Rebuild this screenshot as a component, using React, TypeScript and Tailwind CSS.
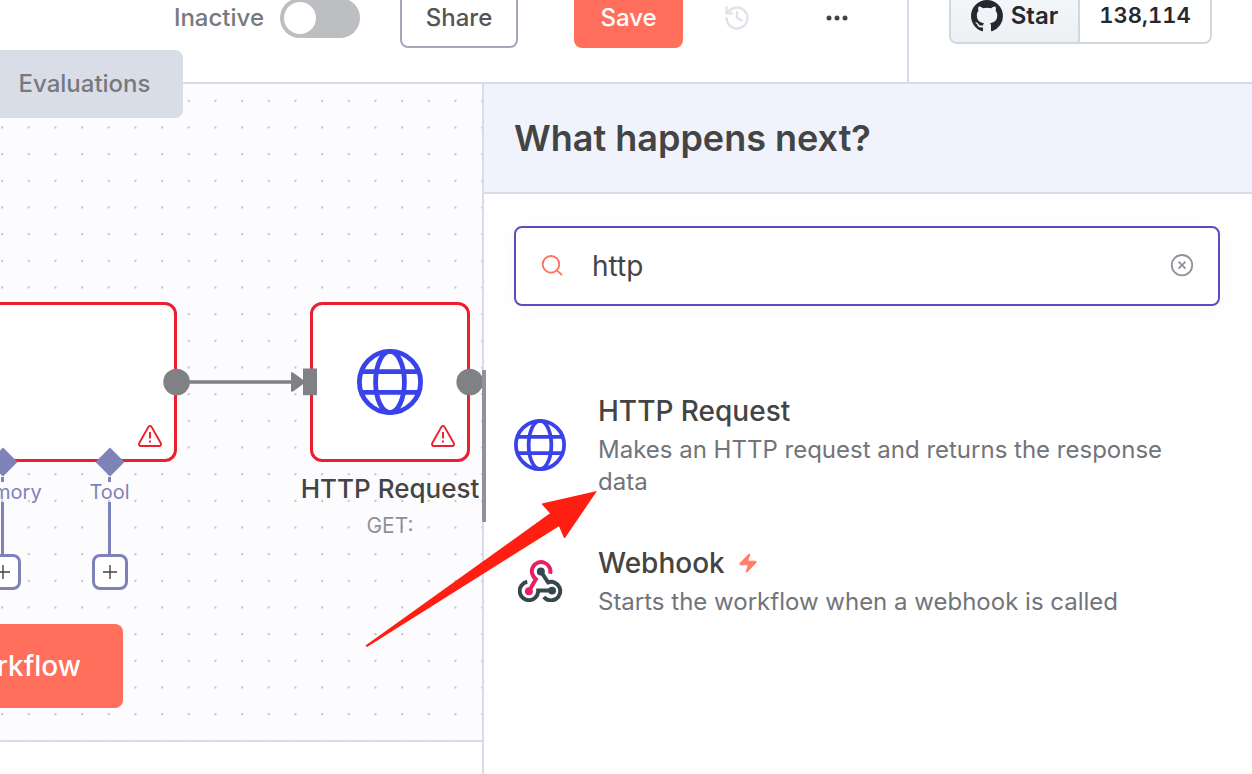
import React, { useState } from "react";
import { History, Zap } from "lucide-react";

interface IconProps {
  className?: string;
}

const GlobeIcon = ({ className }: IconProps) => (
  <svg className={className} viewBox="0 0 66 66" fill="none" stroke="#3a42e9" strokeWidth="4.8">
    <circle cx="33" cy="33" r="30.6" />
    <ellipse cx="33" cy="33" rx="14.4" ry="30.6" />
    <path d="M4 22.6h58M4 43.4h58" />
  </svg>
);

const WebhookIcon = ({ className }: IconProps) => (
  <svg className={className} viewBox="84 62 136 126" fill="none" strokeWidth="12">
    <path stroke="#37474f" d="M112 127.500A28 28 0 1 0 145 157V154H187" />
    <path stroke="#37474f" d="M162 173.500A28 28 0 1 0 175 129L153 96" />
    <path stroke="#e91e63" d="M181 103A28 28 0 1 0 138 119L117 156" />
    <circle cx="153" cy="96" r="12" fill="#37474f" />
    <circle cx="187" cy="154" r="12" fill="#37474f" />
    <circle cx="117" cy="156" r="12" fill="#e91e63" />
  </svg>
);

const WarningIcon = ({ className }: IconProps) => (
  <svg className={className} viewBox="0 0 24 22" fill="none" stroke="#ea1f30" strokeWidth="1.9">
    <path strokeLinejoin="round" d="M10.300 2.100Q12 -.3 13.700 2.100L22.700 18Q23.700 20.900 21 21H3Q.3 20.900 1.300 18Z" />
    <path d="M12 7v6.500M12 15.600v1.900" />
  </svg>
);

const GithubIcon = ({ className }: IconProps) => (
  <svg className={className} viewBox="0 0 16 16" fill="currentColor">
    <path d="M8 0C3.58 0 0 3.58 0 8c0 3.54 2.29 6.53 5.47 7.59.4.07.55-.17.55-.38 0-.19-.01-.82-.01-1.49-2.01.37-2.53-.49-2.69-.94-.09-.23-.48-.94-.82-1.13-.28-.15-.68-.52-.01-.53.63-.01 1.08.58 1.23.82.72 1.21 1.87.87 2.33.66.07-.52.28-.87.51-1.07-1.78-.2-3.64-.89-3.64-3.95 0-.87.31-1.59.82-2.15-.08-.2-.36-1.02.08-2.12 0 0 .67-.21 2.2.82.64-.18 1.32-.27 2-.27s1.36.09 2 .27c1.53-1.04 2.2-.82 2.2-.82.44 1.1.16 1.92.08 2.12.51.56.82 1.27.82 2.15 0 3.07-1.87 3.75-3.65 3.95.29.25.54.73.54 1.48 0 1.07-.01 1.93-.01 2.2 0 .21.15.46.55.38A8.013 8.013 0 0016 8c0-4.42-3.58-8-8-8z" />
  </svg>
);

const TopBar = () => {
  const [active, setActive] = useState(false);

  return (
    <header className="flex h-[84px] shrink-0 border-b-2 border-[#d9dce8] bg-white">
      <div className="flex min-w-0 flex-1 flex-col justify-end overflow-hidden">
        <div className="flex h-32 shrink-0 items-center justify-end pr-[58px]">
          <label htmlFor="active" className="text-2xl font-medium text-[#77797e]">
            {active ? "Active" : "Inactive"}
          </label>
          <input
            id="active"
            type="checkbox"
            checked={active}
            onChange={() => setActive(!active)}
            className="ml-4 mr-10 h-10 w-20 appearance-none rounded-full bg-[#bdbec2] p-1 before:block before:h-8 before:w-8 before:rounded-full before:bg-white"
          />
          <button className="mr-14 h-[60px] w-[118px] rounded-lg border-2 border-[#a3a8b8] text-2xl font-medium text-[#555555]">
            Share
          </button>
          <button className="mr-10 h-[60px] w-[109px] rounded-lg bg-[#ff6f5c] text-2xl font-medium text-white">
            Save
          </button>
          <button aria-label="Workflow history" className="mr-[74px] text-[#e0e3ea]">
            <History size={28} />
          </button>
          <button aria-label="More options">
            <svg className="h-6 w-6" viewBox="0 0 24 24" fill="#444444">
              <circle cx="4" cy="12" r="2.500" />
              <circle cx="12" cy="12" r="2.500" />
              <circle cx="20" cy="12" r="2.500" />
            </svg>
          </button>
        </div>
      </div>
      <div className="flex flex-col justify-end overflow-hidden border-l-2 border-[#d9dce8] px-10 pb-[38px]">
        <div className="flex h-14 shrink-0 rounded-lg border-2 border-[#d1d7df] text-2xl font-semibold text-[#25292f]">
          <a href="#star" className="flex w-[129px] items-center justify-center gap-2 rounded-l-md border-r-2 border-[#d1d7df] bg-linear-to-b from-[#f6f8fa] to-[#ebf0f4]">
            <GithubIcon className="h-8 w-8" />
            Star
          </a>
          <a href="#stargazers" className="flex w-[130px] items-center justify-center text-[22px] tabular-nums">
            138,114
          </a>
        </div>
      </div>
    </header>
  );
};

const AddTool = ({ name }: { name: string }) => (
  <div className="flex w-[107px] flex-col items-center">
    <svg className="h-[30px] w-[30px]" viewBox="0 0 30 30" fill="#7f82b8">
      <path d="M15 0.500L29.500 15L15 29.500L.5 15Z" />
    </svg>
    <span className="h-[5px] w-[3px] bg-[#7f82b8]" />
    <span className="text-xl leading-5 text-[#7f82b8]">{name}</span>
    <span className="h-[52px] w-[3px] bg-[#7f82b8]" />
    <button aria-label={"Add " + name} className="flex h-9 w-9 items-center justify-center rounded-lg border-3 border-[#7f82b8] bg-white">
      <svg className="h-4 w-4" viewBox="0 0 16 16" stroke="#444444" strokeWidth="1.400">
        <path d="M8 1v14M1 8h14" />
      </svg>
    </button>
  </div>
);

const Canvas = () => (
  <main className="relative h-[658px] overflow-hidden border-b-2 border-[#d9dce8] bg-[#fcfcff]">
    <svg className="absolute inset-0 h-full w-full">
      <defs>
        <pattern id="dots" width="20" height="20" patternUnits="userSpaceOnUse" patternTransform="translate(2 16.700) scale(1.33333)">
          <g fill="#b4b5b9">
            <circle cx="0.100" cy="0.100" r="0.750" />
            <circle cx="20.100" cy="0.100" r="0.750" />
            <circle cx="0.100" cy="20.100" r="0.750" />
            <circle cx="20.100" cy="20.100" r="0.750" />
          </g>
        </pattern>
      </defs>
      <rect width="100%" height="100%" fill="url(#dots)" />
    </svg>

    <div className="absolute -left-20 top-[218px] h-40 w-[257px] rounded-xl border-3 border-[#ea1f30] bg-white">
      <WarningIcon className="absolute bottom-3 right-3 h-[22px] w-6" />
    </div>
    <div className="absolute left-[310px] top-[218px] flex h-40 w-40 items-center justify-center rounded-xl border-3 border-[#ea1f30] bg-white">
      <GlobeIcon className="h-[66px] w-[66px]" />
      <WarningIcon className="absolute bottom-3 right-3 h-[22px] w-6" />
    </div>

    {/* connection between the two nodes */}
    <svg className="absolute left-0 top-[280px] h-9 w-[490px]" viewBox="0 0 490 36" fill="#808185">
      <path d="M180 16.300h116v3.400H180z" />
      <circle cx="176.600" cy="18" r="13.300" />
      <path d="M291 9.500q0-2 2-1l13 9.500l-13 9.500q-2 1-2-1z" />
      <rect x="303" y="4.500" width="14" height="26.700" />
      <circle cx="469.700" cy="18" r="13.300" />
    </svg>

    <div className="absolute -left-[51px] top-[363px] flex">
      <AddTool name="Memory" />
      <AddTool name="Tool" />
    </div>

    <div className="absolute left-[290px] top-[388px] flex w-[200px] flex-col items-center">
      <span className="whitespace-nowrap text-[26px] font-medium leading-[34px] text-[#444444]">HTTP Request</span>
      <span className="pt-1 text-[21px] leading-8 text-[#8f9298]">GET:</span>
    </div>

    <button className="absolute -left-[200px] top-[540px] h-[84px] w-[323px] whitespace-nowrap rounded-lg bg-[#ff6f5c] pr-[42px] text-right text-[28px] font-medium text-white">
      Execute workflow
    </button>
  </main>
);

interface NodeItemProps {
  title: string;
  description: string;
  icon: React.ReactNode;
  trigger?: boolean;
}

const NodeItem = ({ title, description, icon, trigger }: NodeItemProps) => (
  <li>
    <button className="flex w-full items-center gap-8 pr-8 text-left">
      <span className="flex w-[52px] shrink-0 justify-center">{icon}</span>
      <span className="flex flex-col gap-1">
        <span className="flex items-center gap-3 text-[28px] font-medium leading-[38px] text-[#444444]">
          {title}
          {trigger && <Zap size={22} className="fill-[#ff7d6b] text-[#ff7d6b]" strokeWidth={1} />}
        </span>
        <span className="text-2xl leading-8 text-[#71747a]">{description}</span>
      </span>
    </button>
  </li>
);

const NodePanel = () => {
  const [search, setSearch] = useState("http");

  return (
    <aside className="relative w-[770px] shrink-0 border-l-2 border-[#d9dce8] bg-white">
      <div className="absolute -left-[2px] top-[286px] h-[152px] w-1 bg-[#8e9299]" />
      <div className="flex h-[110px] items-center border-b-2 border-[#d9dce8] bg-[#f0f3fb] px-[30px]">
        <h1 className="text-4xl font-semibold text-[#444444]">What happens next?</h1>
      </div>
      <div className="pl-[30px] pr-8 pt-8">
        <div className="flex h-20 items-center rounded-lg border-2 border-[#5a4cc2] px-6 shadow-[0_4px_24px_rgba(0,0,0,0.03)]">
          <svg className="h-6 w-6 shrink-0" viewBox="0 0 24 24" fill="none" stroke="#ff6f5c" strokeWidth="1.800">
            <circle cx="11" cy="10.300" r="8.300" />
            <path d="M17 16.300l5 4.800" />
          </svg>
          <input
            aria-label="Search nodes"
            value={search}
            onChange={(e) => setSearch(e.target.value)}
            className="ml-7 min-w-0 flex-1 text-[28px] text-[#444444] outline-none"
          />
          <button aria-label="Clear search" onClick={() => setSearch("")}>
            <svg className="h-6 w-6" viewBox="0 0 24 24" fill="none" stroke="#8e9299" strokeWidth="1.800">
              <circle cx="12" cy="11.200" r="10.200" />
              <path d="M8.500 7.700l7 7M15.500 7.700l-7 7" />
            </svg>
          </button>
        </div>
        <ul className="mt-[86px] flex flex-col gap-[46px]">
          <NodeItem
            title="HTTP Request"
            description="Makes an HTTP request and returns the response data"
            icon={<GlobeIcon className="h-[52px] w-[52px]" />}
          />
          <NodeItem
            title="Webhook"
            description="Starts the workflow when a webhook is called"
            icon={<WebhookIcon className="h-[42px] w-[45px]" />}
            trigger
          />
        </ul>
      </div>
    </aside>
  );
};

export default function App() {
  return (
    <div className="relative flex min-h-screen flex-col overflow-hidden bg-white font-['Inter',sans-serif]">
      <TopBar />
      <div className="flex flex-1">
        <div className="min-w-0 flex-1">
          <Canvas />
        </div>
        <NodePanel />
      </div>

      <button className="absolute left-0 top-[50px] h-[68px] w-[183px] rounded-r-lg bg-[#d9dde8] pr-[14px] text-2xl font-medium text-[#77797e]">
        Evaluations
      </button>

      {/* pointer to the first result */}
      <svg className="pointer-events-none absolute left-[360px] top-[480px] h-[180px] w-[250px]" viewBox="360 480 250 180">
        <path fill="#ff1f12" d="M365.500 645.500L550 513.300L542 504.500V503.500L597 491L565 538H564L559 526.300L367 647Z" />
      </svg>
    </div>
  );
}
